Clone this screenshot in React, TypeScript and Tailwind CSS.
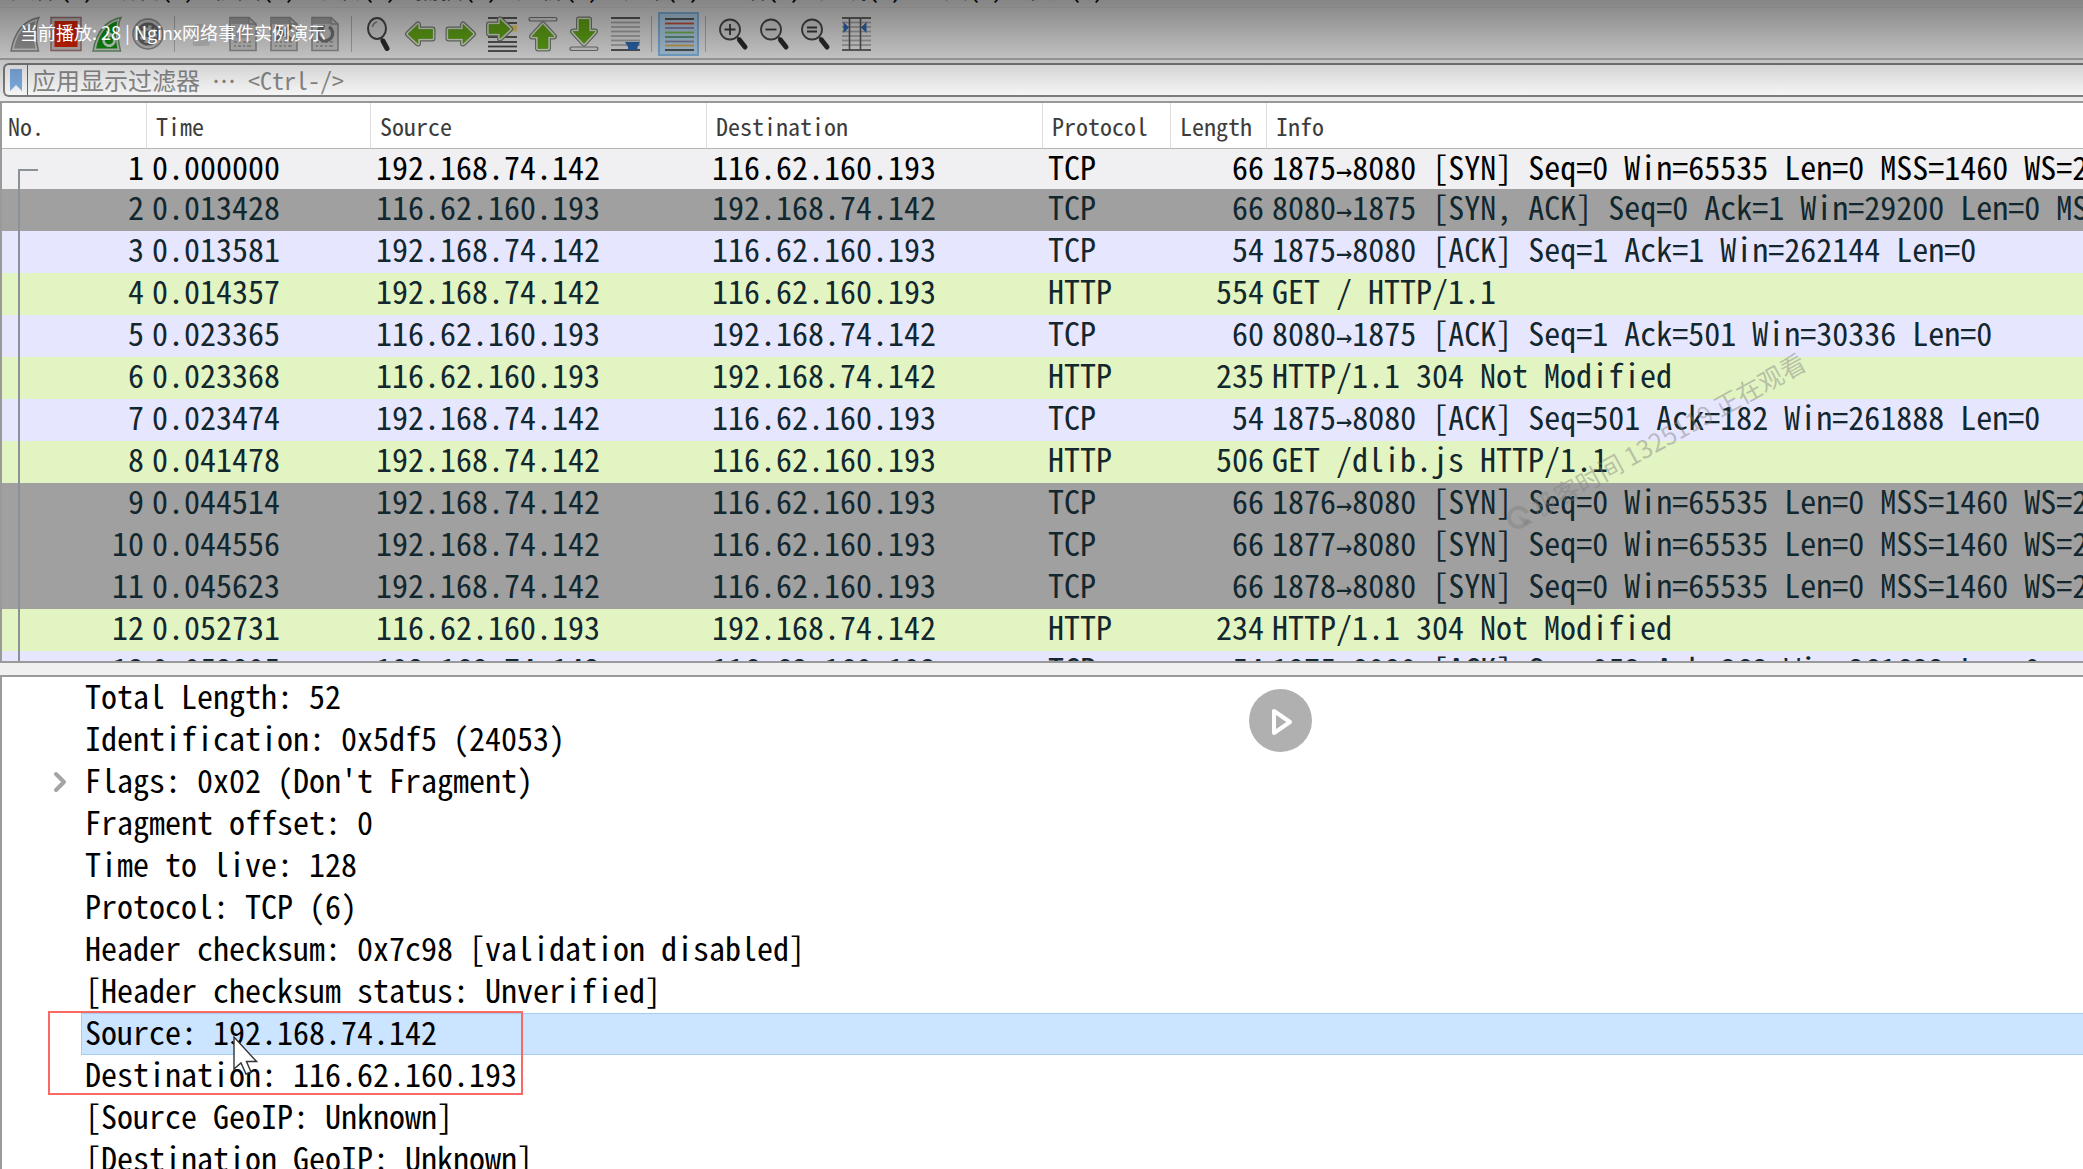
import type { ReactNode } from 'react';
import { clsx } from 'clsx';
import { ChevronRight } from 'lucide-react';

type Tone = 'selected' | 'gray' | 'tcp' | 'http';

const MONO = "font-['Noto_Sans_Mono_CJK_SC','Noto_Sans_Mono','DejaVu_Sans_Mono',monospace]";

const TONES: Record<Tone, string> = {
  selected: 'bg-[#f0eff1] text-black',
  gray: 'bg-[#a0a0a0] text-[#12272e]',
  tcp: 'bg-[#e7e6ff] text-[#12272e]',
  http: 'bg-[#e3f4c3] text-[#12272e]',
};

const MENUS = ['文件(F)', '编辑(E)', '视图(V)', '跳转(G)', '捕获(C)', '分析(A)', '统计(S)', '电话(Y)', '无线(W)', '工具(T)', '帮助(H)'];

const CLIENT = '192.168.74.142';
const SERVER = '116.62.160.193';

interface Packet {
  time: string;
  out: boolean;
  proto: string;
  len: number;
  info: string;
  tone: Tone;
}

const PACKETS: Packet[] = [
  { time: '0.000000', out: true, proto: 'TCP', len: 66, info: '1875→8080 [SYN] Seq=0 Win=65535 Len=0 MSS=1460 WS=256 SACK_PERM=1', tone: 'selected' },
  { time: '0.013428', out: false, proto: 'TCP', len: 66, info: '8080→1875 [SYN, ACK] Seq=0 Ack=1 Win=29200 Len=0 MSS=1460', tone: 'gray' },
  { time: '0.013581', out: true, proto: 'TCP', len: 54, info: '1875→8080 [ACK] Seq=1 Ack=1 Win=262144 Len=0', tone: 'tcp' },
  { time: '0.014357', out: true, proto: 'HTTP', len: 554, info: 'GET / HTTP/1.1', tone: 'http' },
  { time: '0.023365', out: false, proto: 'TCP', len: 60, info: '8080→1875 [ACK] Seq=1 Ack=501 Win=30336 Len=0', tone: 'tcp' },
  { time: '0.023368', out: false, proto: 'HTTP', len: 235, info: 'HTTP/1.1 304 Not Modified', tone: 'http' },
  { time: '0.023474', out: true, proto: 'TCP', len: 54, info: '1875→8080 [ACK] Seq=501 Ack=182 Win=261888 Len=0', tone: 'tcp' },
  { time: '0.041478', out: true, proto: 'HTTP', len: 506, info: 'GET /dlib.js HTTP/1.1', tone: 'http' },
  { time: '0.044514', out: true, proto: 'TCP', len: 66, info: '1876→8080 [SYN] Seq=0 Win=65535 Len=0 MSS=1460 WS=256 SACK_PERM=1', tone: 'gray' },
  { time: '0.044556', out: true, proto: 'TCP', len: 66, info: '1877→8080 [SYN] Seq=0 Win=65535 Len=0 MSS=1460 WS=256 SACK_PERM=1', tone: 'gray' },
  { time: '0.045623', out: true, proto: 'TCP', len: 66, info: '1878→8080 [SYN] Seq=0 Win=65535 Len=0 MSS=1460 WS=256 SACK_PERM=1', tone: 'gray' },
  { time: '0.052731', out: false, proto: 'HTTP', len: 234, info: 'HTTP/1.1 304 Not Modified', tone: 'http' },
  { time: '0.052805', out: true, proto: 'TCP', len: 54, info: '1875→8080 [ACK] Seq=953 Ack=362 Win=261632 Len=0', tone: 'tcp' },
];

const DETAILS = [
  { text: 'Total Length: 52' },
  { text: 'Identification: 0x5df5 (24053)' },
  { text: "Flags: 0x02 (Don't Fragment)", expandable: true },
  { text: 'Fragment offset: 0' },
  { text: 'Time to live: 128' },
  { text: 'Protocol: TCP (6)' },
  { text: 'Header checksum: 0x7c98 [validation disabled]' },
  { text: '[Header checksum status: Unverified]' },
  { text: 'Source: 192.168.74.142', selected: true },
  { text: 'Destination: 116.62.160.193' },
  { text: '[Source GeoIP: Unknown]' },
  { text: '[Destination GeoIP: Unknown]' },
];

/* ---------- toolbar icons ---------- */

function Icon({ children }: { children: ReactNode }) {
  return (
    <svg viewBox="0 0 32 36" className="w-8 h-9" fill="none" aria-hidden="true">
      {children}
    </svg>
  );
}

function GreenArrow({ d }: { d: string }) {
  return (
    <g strokeLinejoin="round">
      <path d={d} stroke="#7c8574" strokeWidth="6" />
      <path d={d} stroke="#e9f2dc" strokeWidth="3.6" />
      <path d={d} fill="#67b017" stroke="#5a9c14" strokeWidth="0.6" />
    </g>
  );
}

function Lines({ ys, x1 = 2, x2 = 31, color = '#4c4c4c' }: { ys: number[]; x1?: number; x2?: number; color?: string }) {
  return (
    <>
      {ys.map((y) => (
        <path key={y} d={`M${x1} ${y}H${x2}`} stroke={color} strokeWidth="1.8" />
      ))}
    </>
  );
}

function Fin({ fill, edge, children }: { fill: string; edge: string; children?: ReactNode }) {
  return (
    <Icon>
      <path d="M2 35C5 18 13 5 30 1.500C26 9 26.500 25 29.500 35Z" fill="#dcdcdc" stroke={edge} strokeWidth="1.400" />
      <path d="M5 32.500C8 19 14 9 26.500 5C24 13 24.500 24 26.500 32.500Z" fill={fill} />
      {children}
    </Icon>
  );
}

function FileIcon({ children }: { children: ReactNode }) {
  return (
    <Icon>
      <path d="M3 1.500H22L29 8V34.500H3Z" fill="#d4d4d4" stroke="#9a9a9a" strokeWidth="1.600" />
      <path d="M3.500 2H21.500V8H3.500Z" fill="#b0b0b0" />
      <path d="M22 1.500V8H29" stroke="#9a9a9a" strokeWidth="1.400" />
      <path d="M7 26h3M12 26h2M16 26h3M21 26h3M7 30h2M11 30h3M16 30h2M20 30h4" stroke="#a8a8a8" strokeWidth="2" />
      {children}
    </Icon>
  );
}

function Lens({ d }: { d: string }) {
  return (
    <Icon>
      <circle cx="13" cy="13.500" r="10" fill="#e4e4e4" stroke="#4a4a4a" strokeWidth="1.800" />
      <path d="M20 21L23 24" stroke="#4a4a4a" strokeWidth="2" />
      <path d="M22.500 24L28 31" stroke="#2c2c2c" strokeWidth="5" strokeLinecap="round" />
      <path d={d} stroke="#3c3c3c" strokeWidth="1.800" />
    </Icon>
  );
}

const startIcon = <Fin fill="#a2a2a2" edge="#8a8a8a" />;

const stopIcon = (
  <Icon>
    <path d="M1 1.500H31V34.500H1Z" fill="#d0c8c8" stroke="#a07878" strokeWidth="1.400" />
    <path d="M4.500 5H27.500V31H4.500Z" fill="#e22400" />
  </Icon>
);

const restartIcon = (
  <Fin fill="#129a12" edge="#6f9a6f">
    <path d="M13 22a5.500 5.500 0 1 0 7-3" stroke="#dff0df" strokeWidth="2.600" />
    <path d="M15 14.500l7 3.500-5 5z" fill="#dff0df" />
  </Fin>
);

const optionsIcon = (
  <Icon>
    <circle cx="16" cy="18" r="15" fill="#d0d0d0" stroke="#8c8c8c" strokeWidth="1.400" />
    <circle cx="16" cy="18" r="11.500" fill="#6e6e6e" />
    <circle cx="16" cy="18" r="7" stroke="#c4c4c4" strokeWidth="4" strokeDasharray="3 2.500" />
    <circle cx="16" cy="18" r="5" stroke="#c4c4c4" strokeWidth="3" />
  </Icon>
);

const openIcon = (
  <Icon>
    <path d="M7 30V11l3-3h6l2 3h5v7h4l-4 12Z" fill="#b8b8b8" opacity="0.500" />
  </Icon>
);

const saveIcon = (
  <FileIcon>
    <path d="M9 13h14v9H9z" fill="#bcbcbc" />
  </FileIcon>
);

const closeIcon = (
  <FileIcon>
    <path d="M8 10l15 14M23 10L8 24" stroke="#7a7a7a" strokeWidth="4" />
  </FileIcon>
);

const reloadIcon = (
  <FileIcon>
    <path d="M20 11a7.500 7.500 0 1 1-9 1" stroke="#7a7a7a" strokeWidth="3.400" />
    <path d="M8 9l8 0-2 8z" fill="#7a7a7a" />
  </FileIcon>
);

const findIcon = (
  <Icon>
    <ellipse cx="14" cy="12.500" rx="9" ry="10.500" fill="#e4e4e4" stroke="#4a4a4a" strokeWidth="2" />
    <path d="M9.500 11c.5-3 2-4.500 4.500-5" stroke="#8a8a8a" strokeWidth="1.600" />
    <path d="M18 22l1.500 3" stroke="#4a4a4a" strokeWidth="2.200" />
    <path d="M20 25L24 32.500" stroke="#2c2c2c" strokeWidth="5" strokeLinecap="round" />
  </Icon>
);

const backIcon = (
  <Icon>
    <GreenArrow d="M4 18L14 8.500V13.500H28.500V22.500H14V27.500Z" />
  </Icon>
);

const forwardIcon = (
  <Icon>
    <GreenArrow d="M28 18L18 8.500V13.500H3.500V22.500H18V27.500Z" />
  </Icon>
);

const goToIcon = (
  <Icon>
    <Lines ys={[2, 7, 21, 26, 30.5, 35]} />
    <path d="M22 9.500H31V15.500H22Z" fill="#f2dc6e" />
    <GreenArrow d="M24 13L14 3.500V8.500H3V17.500H14V22.500Z" />
  </Icon>
);

const firstIcon = (
  <Icon>
    <rect x="2" y="1.500" width="28" height="3.500" rx="1.750" fill="#e8e8e8" stroke="#7c7c7c" strokeWidth="1.200" />
    <GreenArrow d="M16 8.500L27 20.500H21V32.500H11V20.500H5Z" />
  </Icon>
);

const lastIcon = (
  <Icon>
    <rect x="2" y="31" width="28" height="3.500" rx="1.750" fill="#e8e8e8" stroke="#7c7c7c" strokeWidth="1.200" />
    <GreenArrow d="M16 27.500L5 15.500H11V3.500H21V15.500H27Z" />
  </Icon>
);

const autoScrollIcon = (
  <Icon>
    <Lines ys={[2, 34]} />
    <Lines ys={[6.5, 11, 15.5, 20, 24.5, 29]} color="#b0b0b0" />
    <path d="M16 26H31L28.500 31V34H19V31Z" fill="#2f6cb8" />
  </Icon>
);

const colorizeIcon = (
  <Icon>
    <Lines ys={[3, 34]} />
    <Lines ys={[7.5]} color="#d8503c" />
    <Lines ys={[12]} color="#8f86b8" />
    <Lines ys={[16.5]} color="#7cc050" />
    <Lines ys={[21]} color="#5c9a78" />
    <Lines ys={[25.5]} color="#8c8ca8" />
    <Lines ys={[29.5]} color="#dcb04c" />
  </Icon>
);

const columnsIcon = (
  <Icon>
    <Lines ys={[2, 34]} color="#5c5c5c" />
    <Lines ys={[6.5, 11, 15.5, 20, 24.5, 29]} color="#b0b0b0" />
    <path d="M9.500 2V34M20.500 2V34" stroke="#5c5c5c" strokeWidth="1.600" />
    <path d="M3.500 6L9 11.500L3.500 17ZM26.500 6L21 11.500L26.500 17Z" fill="#2f6cb8" />
  </Icon>
);

interface Tool {
  label: string;
  icon: ReactNode;
  active?: boolean;
}

const TOOL_GROUPS: Tool[][] = [
  [
    { label: '开始捕获', icon: startIcon },
    { label: '停止捕获', icon: stopIcon },
    { label: '重新开始捕获', icon: restartIcon },
    { label: '捕获选项', icon: optionsIcon },
  ],
  [
    { label: '打开', icon: openIcon },
    { label: '保存', icon: saveIcon },
    { label: '关闭', icon: closeIcon },
    { label: '重新加载', icon: reloadIcon },
  ],
  [
    { label: '查找分组', icon: findIcon },
    { label: '上一分组', icon: backIcon },
    { label: '下一分组', icon: forwardIcon },
    { label: '转到分组', icon: goToIcon },
    { label: '首个分组', icon: firstIcon },
    { label: '最新分组', icon: lastIcon },
    { label: '自动滚动', icon: autoScrollIcon },
  ],
  [{ label: '着色', icon: colorizeIcon, active: true }],
  [
    { label: '放大', icon: <Lens d="M7.500 13.500H18.500M13 8V19" /> },
    { label: '缩小', icon: <Lens d="M7.500 13.500H18.500" /> },
    { label: '普通大小', icon: <Lens d="M8 11.500H18M8 15.500H18" /> },
    { label: '调整列宽', icon: columnsIcon },
  ],
];

/* ---------- parts ---------- */

function MenuBar() {
  return (
    <nav className="flex items-end gap-[17px] h-2 px-[11px] pb-[7px] overflow-hidden border-b border-[#e4e4e4]">
      {MENUS.map((m) => (
        <button key={m} className="shrink-0 text-2xl leading-6 text-black">
          {m}
        </button>
      ))}
    </nav>
  );
}

function Toolbar() {
  return (
    <div className="flex items-center h-[52px] px-1 pt-[2px] border-b-2 border-[#b4b4b4]">
      {TOOL_GROUPS.map((group, g) => (
        <div key={g} className="flex items-center">
          {g > 0 && <span className="mx-[6px] w-px h-9 bg-[#b8b8b8]" />}
          {group.map((t) => (
            <button
              key={t.label}
              aria-label={t.label}
              className={clsx(
                'w-[41px] h-11 flex items-center justify-center',
                t.active && 'bg-[#bcdcf5] border-2 border-[#86bdea]',
              )}
            >
              {t.icon}
            </button>
          ))}
        </div>
      ))}
    </div>
  );
}

function FilterBar() {
  return (
    <div className="pl-[3px] pt-[3px] pb-1">
      <div className="flex h-[34px] border-2 border-r-0 border-[#808080] rounded-l-md bg-white">
        <button aria-label="书签" className="w-[23px] shrink-0 flex items-center justify-center border-r border-[#6c6c6c]">
          <svg viewBox="0 0 12 22" className="w-3 h-[22px]" aria-hidden="true">
            <path d="M0 0H12V22L6 16L0 22Z" fill="#7fb0e6" />
          </svg>
        </button>
        <input
          type="text"
          aria-label="显示过滤器"
          placeholder="应用显示过滤器 … <Ctrl-/>"
          className="flex-1 min-w-0 px-1 text-2xl font-light outline-none placeholder:text-[#8c8c8c]"
        />
      </div>
    </div>
  );
}

/* the arrow glyph of the CJK font is two cells wide, so it is set in a narrower one */
function Info({ text }: { text: string }) {
  const [from, to] = text.split('→');
  if (!to) return <>{text}</>;
  return (
    <>
      {from}
      <span className="font-['DejaVu_Sans_Mono',monospace] text-[27px] leading-none">→</span>
      {to}
    </>
  );
}

function PacketList() {
  return (
    <section className="h-[562px] overflow-hidden border-t-2 border-b-2 border-l-2 border-[#9a9a9a] bg-white">
      <table className="w-full table-fixed border-separate border-spacing-0 whitespace-nowrap">
        <colgroup>
          <col className="w-[145px]" />
          <col className="w-[224px]" />
          <col className="w-[336px]" />
          <col className="w-[336px]" />
          <col className="w-[128px]" />
          <col className="w-[96px]" />
          <col />
        </colgroup>
        <thead>
          <tr className="text-2xl text-[#3c3c3c]">
            {['No.', 'Time', 'Source', 'Destination', 'Protocol', 'Length', 'Info'].map((h) => (
              <th
                key={h}
                scope="col"
                className="h-[46px] p-0 pl-[9px] first:pl-[6px] text-left font-normal leading-8 border-b border-b-[#b4b4b4] border-r border-r-[#dedede] last:border-r-0"
              >
                {h}
              </th>
            ))}
          </tr>
        </thead>
        <tbody className="text-[32px] leading-[34px] align-top">
          {PACKETS.map((p, i) => (
            <tr key={p.time} className={clsx(i === 0 ? 'h-10' : 'h-[42px]', TONES[p.tone])}>
              <td className="relative p-0 pr-[3px] text-right">
                <span
                  className={clsx(
                    'absolute left-4 bottom-0 w-5 border-l-2 border-[#8a9298]',
                    i === 0 ? 'top-1/2 border-t-2' : 'top-0',
                  )}
                />
                {i + 1}
              </td>
              <td className="p-0 pl-[5px]">{p.time}</td>
              <td className="p-0 pl-[5px]">{p.out ? CLIENT : SERVER}</td>
              <td className="p-0 pl-[5px]">{p.out ? SERVER : CLIENT}</td>
              <td className="p-0 pl-[5px]">{p.proto}</td>
              <td className="p-0 pr-[3px] text-right">{p.len}</td>
              <td className="p-0 pl-[5px] overflow-hidden">
                <Info text={p.info} />
              </td>
            </tr>
          ))}
        </tbody>
      </table>
    </section>
  );
}

function DetailPane() {
  return (
    <section className="relative flex-1 min-h-0 overflow-hidden border-t-2 border-l-2 border-[#9a9a9a] bg-white">
      <ul className="text-[32px] leading-[34px] text-black">
        {DETAILS.map((d) => (
          <li key={d.text} className="flex h-[42px]">
            <span className="w-[79px] shrink-0 flex items-center justify-end pr-[5px]">
              {d.expandable && (
                <button aria-label="展开">
                  <ChevronRight className="size-8 text-[#a4a4a4]" strokeWidth={3} />
                </button>
              )}
            </span>
            <span
              className={clsx(
                'flex-1 pl-[3px] border border-r-0 whitespace-nowrap',
                d.selected ? 'bg-[#cbe4ff] border-[#a6cdf0]' : 'border-transparent',
              )}
            >
              {d.text}
            </span>
          </li>
        ))}
      </ul>
      <div className="absolute left-[46px] top-[334px] w-[475px] h-[84px] border-2 border-[#fa6a64]" />
      <svg viewBox="0 0 26 42" className="absolute left-[230px] top-[358px] w-[26px] h-[42px]" aria-hidden="true">
        <path d="M2 2V34L9 28L14 39L19 37L14.500 26.500H24.500Z" fill="#fff" stroke="#333" strokeWidth="1.400" />
      </svg>
    </section>
  );
}

function PlayButton() {
  return (
    <button
      aria-label="播放"
      className="absolute left-[1249px] top-[689px] size-[63px] rounded-full bg-[#b0b0b0] flex items-center justify-center"
    >
      <svg viewBox="0 0 28 32" className="w-7 h-8" fill="none" aria-hidden="true">
        <path d="M7 6V28L23 17Z" stroke="#fff" strokeWidth="4" strokeLinejoin="round" />
      </svg>
    </button>
  );
}

function Watermark() {
  return (
    <div className="absolute left-[1486px] top-[423px] flex items-center gap-1 -rotate-29 text-[25px] whitespace-nowrap text-[#808080]/45 font-['Noto_Sans_CJK_SC',sans-serif] pointer-events-none">
      <svg viewBox="0 0 26 26" className="size-[26px]" fill="none" aria-hidden="true">
        <path d="M20 19A9.500 9.500 0 1 1 22.500 13" stroke="currentColor" strokeWidth="4" />
        <path d="M13 11L24 24H15Z" fill="currentColor" />
      </svg>
      极客时间 1325119 正在观看
    </div>
  );
}

function PlayerTitle() {
  return (
    <div className="absolute inset-x-0 top-0 h-[104px] px-5 pt-4 bg-linear-to-b from-black/45 to-transparent pointer-events-none">
      <h1 className="text-lg leading-8 text-white font-['Noto_Sans_CJK_SC',sans-serif]">
        当前播放: 28 | Nginx网络事件实例演示
      </h1>
    </div>
  );
}

export default function App() {
  return (
    <main className={clsx('relative flex flex-col h-screen overflow-hidden bg-[#f0f0f0]', MONO)}>
      <MenuBar />
      <Toolbar />
      <FilterBar />
      <PacketList />
      <div className="h-3 shrink-0" />
      <DetailPane />
      <Watermark />
      <PlayerTitle />
      <PlayButton />
    </main>
  );
}
